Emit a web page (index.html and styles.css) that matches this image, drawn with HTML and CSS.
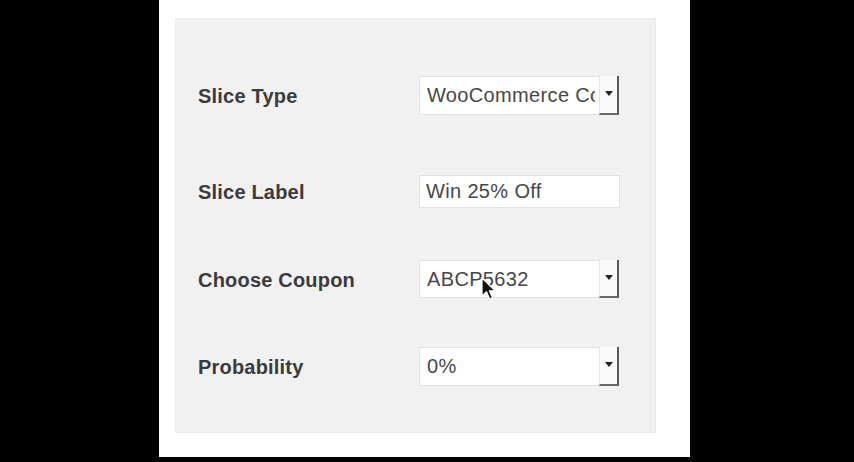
FILE: index.html
```html
<!DOCTYPE html>
<html>
<head>
<meta charset="utf-8">
<link rel="stylesheet" href="styles.css">
</head>
<body>
<div class="sheet">
  <div class="panel">
    <div class="row row-type">
      <div class="label">Slice Type</div>
      <div class="control select">
        <span class="value">WooCommerce Coupon</span>
        <span class="arrow"><svg width="8" height="5" viewBox="0 0 8 5"><path d="M0 0H8L4 5Z" fill="#222"/></svg></span>
      </div>
    </div>
    <div class="row row-label">
      <div class="label">Slice Label</div>
      <div class="control text">
        <span class="value">Win 25% Off</span>
      </div>
    </div>
    <div class="row row-coupon">
      <div class="label">Choose Coupon</div>
      <div class="control select">
        <span class="value">ABCP5632</span>
        <span class="arrow"><svg width="8" height="5" viewBox="0 0 8 5"><path d="M0 0H8L4 5Z" fill="#222"/></svg></span>
        <svg class="cursor" width="16" height="24" viewBox="0 0 16 24"><path d="M1 1V19L5.5 14.8L8.6 22L11.4 20.8L8.4 13.8H14.2Z" fill="#111" stroke="#fff" stroke-width="1.2" stroke-linejoin="round"/></svg>
      </div>
    </div>
    <div class="row row-prob">
      <div class="label">Probability</div>
      <div class="control select">
        <span class="value">0%</span>
        <span class="arrow"><svg width="8" height="5" viewBox="0 0 8 5"><path d="M0 0H8L4 5Z" fill="#222"/></svg></span>
      </div>
    </div>
  </div>
</div>
</body>
</html>
```
FILE: styles.css
```css
html, body {
  margin: 0;
  padding: 0;
  background: #000;
}
body {
  width: 854px;
  height: 462px;
  overflow: hidden;
  font-family: "Liberation Sans", Arial, sans-serif;
}
.sheet {
  margin-left: 159px;
  width: 531px;
  height: 457px;
  background: #fff;
  padding-top: 18px;
  box-sizing: border-box;
}
.panel {
  margin-left: 16px;
  width: 481px;
  height: 415px;
  box-sizing: border-box;
  background: #f1f1f1;
  border: 1px solid #ebebeb;
  padding: 57px 0 0 22px;
  display: flex;
  flex-direction: column;
}
.row {
  display: flex;
  align-items: center;
}
.row-label { margin-top: 60px; }
.row-coupon { margin-top: 52px; }
.row-prob { margin-top: 49px; }
.label {
  width: 221px;
  font-weight: bold;
  font-size: 20px;
  letter-spacing: 0.2px;
  color: #3b3b3b;
  padding-top: 2px;
}
.control {
  position: relative;
  width: 200px;
  box-sizing: border-box;
  background: #fff;
  border: 1px solid #e2e2e2;
  display: flex;
  align-items: center;
  font-size: 20px;
  letter-spacing: 0.35px;
  color: #474747;
}
.select {
  height: 39px;
}
.row-coupon .select { height: 38px; }
.text {
  height: 33px;
  width: 201px;
}
.value {
  flex: 1;
  overflow: hidden;
  white-space: nowrap;
  padding-left: 7px;
}
.select .value { margin-right: 4px; }
.text .value { padding-left: 6px; }
.arrow {
  align-self: stretch;
  width: 20px;
  box-sizing: border-box;
  margin: -1px -1px -1px 0;
  border-left: 1px solid #e4e4e4;
  border-right: 2px solid #5a5a5a;
  border-bottom: 2px solid #6a6a6a;
  background: #fafafa;
  display: flex;
  align-items: center;
  justify-content: center;
  padding-bottom: 2px;
}
.cursor {
  position: absolute;
  left: 61px;
  top: 16px;
}
```
